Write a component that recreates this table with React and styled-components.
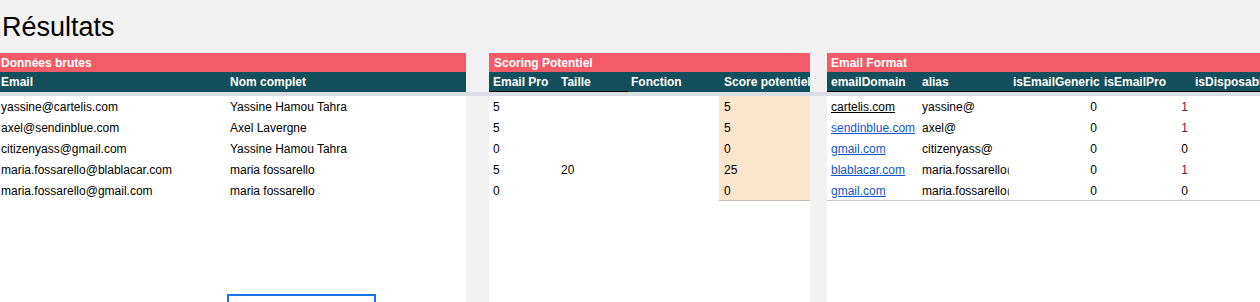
import React from "react";
import styled, { createGlobalStyle } from "styled-components";

const Global = createGlobalStyle`
  html, body { margin: 0; padding: 0; background: #f2f2f2; overflow: hidden; }
  body { font-family: "Liberation Sans", Arial, sans-serif; color: #000; }
  * { box-sizing: border-box; }
`;

const Page = styled.div`
  width: 1260px;
  height: 302px;
  overflow: hidden;
  display: flex;
  flex-direction: column;
`;

const Title = styled.h1`
  flex: 0 0 53px;
  margin: 0;
  height: 53px;
  padding: 12px 0 0 2px;
  font-size: 27px;
  line-height: 31px;
  font-weight: 400;
  color: #000;
`;

const Panels = styled.div`
  flex: 1 1 0;
  min-height: 0;
  overflow: hidden;
  display: flex;
  align-items: stretch;
  background: linear-gradient(
    to bottom,
    #f2f2f2 39px,
    #dadde6 39px,
    #dadde6 43px,
    #f2f2f2 43px
  );
`;

const Panel = styled.section`
  flex: ${(p) => (p.$grow ? "1 1 0" : `0 0 ${p.$w}px`)};
  min-width: 0;
  margin-left: ${(p) => p.$ml || 0}px;
  background: #fff;
  overflow: hidden;
  display: flex;
  flex-direction: column;
`;

const SectionTitle = styled.div`
  flex-shrink: 0;
  height: 19px;
  padding-top: 2px;
  line-height: 17px;
  background: #f45b69;
  color: #fff;
  font-weight: 700;
  font-size: 12px;
  padding-left: ${(p) => p.$pl}px;
  white-space: nowrap;
  overflow: hidden;
`;

const Grid = styled.div`
  flex-shrink: 0;
  display: grid;
  grid-template-columns: ${(p) => p.$cols};
`;

const HeadCell = styled.div`
  height: 20px;
  padding-top: 2px;
  line-height: 17px;
  background: #134f5c;
  color: #fff;
  font-weight: 700;
  font-size: 12px;
  padding-left: ${(p) => p.$pl}px;
  white-space: nowrap;
  overflow: hidden;
  border-bottom: 1px solid ${(p) => (p.$line ? "#000" : "#134f5c")};
`;

const Band = styled.div`
  flex-shrink: 0;
  height: 4px;
  background: #dadde6;
`;

const Cell = styled.div`
  height: 21px;
  padding-top: 2px;
  line-height: 18px;
  font-size: 12px;
  white-space: nowrap;
  overflow: hidden;
  padding-left: ${(p) => (p.$right ? 0 : p.$pl)}px;
  padding-right: ${(p) => (p.$right ? 3 : 0)}px;
  text-align: ${(p) => (p.$right ? "right" : "left")};
  background: ${(p) => (p.$hl ? "#fce5cd" : "#fff")};
  color: ${(p) => p.$color || "#000"};
  border-bottom: 1px solid
    ${(p) => (p.$last ? p.$lastColor || "#cccccc" : "transparent")};
`;

const Link = styled.span`
  text-decoration: underline;
  color: ${(p) => (p.$visited ? "#000" : "#1155cc")};
`;

const Selection = styled.div`
  flex-shrink: 0;
  margin: 93px 0 0 227px;
  width: 149px;
  height: 20px;
  border: 2px solid #1a73e8;
  border-bottom: none;
`;

const rawCols = "229px 237px";
const rawData = [
  ["yassine@cartelis.com", "Yassine Hamou Tahra"],
  ["axel@sendinblue.com", "Axel Lavergne"],
  ["citizenyass@gmail.com", "Yassine Hamou Tahra"],
  ["maria.fossarello@blablacar.com", "maria fossarello"],
  ["maria.fossarello@gmail.com", "maria fossarello"],
];

const scoreCols = "68px 71px 91px 91px";
const scoreHead = [
  { t: "Email Pro", pl: 4, line: true },
  { t: "Taille", pl: 4, line: true },
  { t: "Fonction", pl: 3, line: false },
  { t: "Score potentiel", pl: 5, line: false },
];
const scoreData = [
  ["5", "", "", "5"],
  ["5", "", "", "5"],
  ["0", "", "", "0"],
  ["5", "20", "", "25"],
  ["0", "", "", "0"],
];

const fmtCols = "91px 91px 91px 91px 91px";
const fmtHead = ["emailDomain", "alias", "isEmailGeneric", "isEmailPro", "isDisposable"];
const fmtData = [
  ["cartelis.com", "yassine@", "0", "1", true],
  ["sendinblue.com", "axel@", "0", "1", false],
  ["gmail.com", "citizenyass@", "0", "0", false],
  ["blablacar.com", "maria.fossarello@blablacar.com", "0", "1", false],
  ["gmail.com", "maria.fossarello@gmail.com", "0", "0", false],
];

export default function App() {
  return (
    <Page>
      <Global />
      <Title>Résultats</Title>
      <Panels>
        <Panel $w={466}>
          <SectionTitle $pl={1}>Données brutes</SectionTitle>
          <Grid $cols={rawCols}>
            <HeadCell $pl={1}>Email</HeadCell>
            <HeadCell $pl={1}>Nom complet</HeadCell>
          </Grid>
          <Band />
          <Grid $cols={rawCols}>
            {rawData.map((r, i) => (
              <React.Fragment key={i}>
                <Cell $pl={1}>{r[0]}</Cell>
                <Cell $pl={1}>{r[1]}</Cell>
              </React.Fragment>
            ))}
          </Grid>
          <Selection />
        </Panel>

        <Panel $w={321} $ml={23}>
          <SectionTitle $pl={5}>Scoring Potentiel</SectionTitle>
          <Grid $cols={scoreCols}>
            {scoreHead.map((h) => (
              <HeadCell key={h.t} $pl={h.pl} $line={h.line}>
                {h.t}
              </HeadCell>
            ))}
          </Grid>
          <Band />
          <Grid $cols={scoreCols}>
            {scoreData.map((r, i) =>
              r.map((v, j) => (
                <Cell
                  key={`${i}-${j}`}
                  $pl={scoreHead[j].pl}
                  $hl={j === 3}
                  $last={j === 3 && i === scoreData.length - 1}
                  $lastColor="#c6bcb2"
                >
                  {v}
                </Cell>
              ))
            )}
          </Grid>
        </Panel>

        <Panel $grow $ml={17}>
          <SectionTitle $pl={4}>Email Format</SectionTitle>
          <Grid $cols={fmtCols}>
            {fmtHead.map((h) => (
              <HeadCell key={h} $pl={4} $line>
                {h}
              </HeadCell>
            ))}
          </Grid>
          <Band />
          <Grid $cols={fmtCols}>
            {fmtData.map((r, i) => {
              const last = i === fmtData.length - 1;
              return (
                <React.Fragment key={i}>
                  <Cell $pl={4} $last={last}>
                    <Link $visited={r[4]}>{r[0]}</Link>
                  </Cell>
                  <Cell $pl={4} $last={last}>{r[1]}</Cell>
                  <Cell $right $last={last}>{r[2]}</Cell>
                  <Cell $right $last={last} $color={r[3] === "1" ? "#7a1238" : "#000"}>
                    {r[3]}
                  </Cell>
                  <Cell $pl={4} $last={last} />
                </React.Fragment>
              );
            })}
          </Grid>
        </Panel>
      </Panels>
    </Page>
  );
}
